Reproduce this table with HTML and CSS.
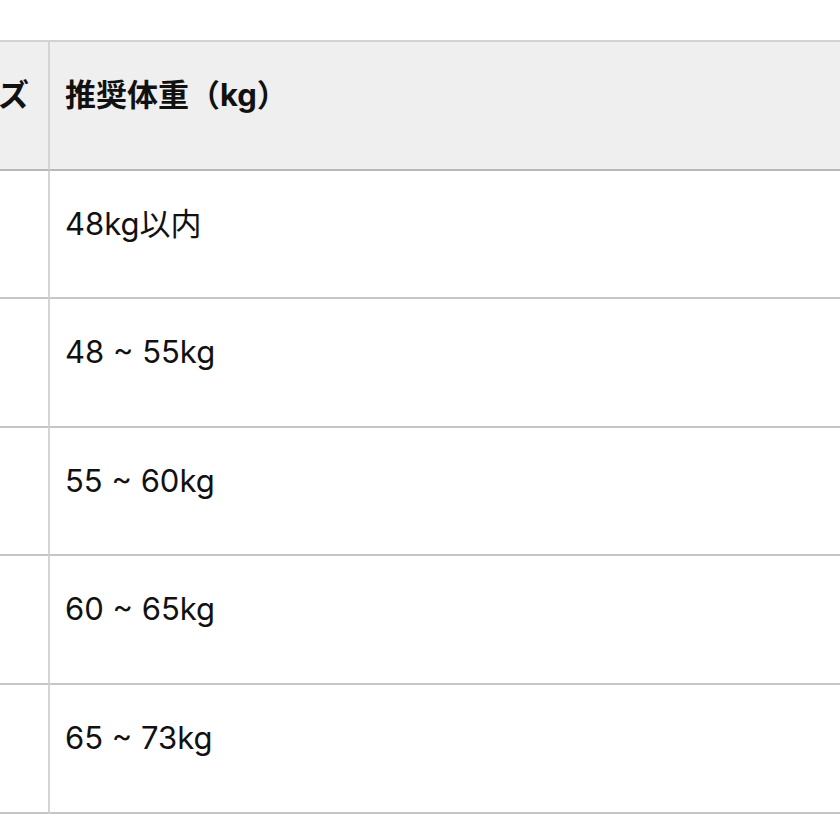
FILE: index.html
```html
<!DOCTYPE html>
<html lang="ja">
<head>
<meta charset="utf-8">
<link rel="stylesheet" href="styles.css">
</head>
<body>
<div class="wrap">
  <table class="size-table">
    <colgroup>
      <col class="col-size">
      <col class="col-weight">
    </colgroup>
    <thead>
      <tr>
        <th class="c-size"><div class="clip">サイズ</div></th>
        <th class="c-weight">推奨体重（kg）</th>
      </tr>
    </thead>
    <tbody>
      <tr><td class="c-size"></td><td class="c-weight">48kg以内</td></tr>
      <tr><td class="c-size"></td><td class="c-weight">48 ~ 55kg</td></tr>
      <tr><td class="c-size"></td><td class="c-weight">55 ~ 60kg</td></tr>
      <tr><td class="c-size"></td><td class="c-weight">60 ~ 65kg</td></tr>
      <tr><td class="c-size"></td><td class="c-weight">65 ~ 73kg</td></tr>
    </tbody>
  </table>
</div>
</body>
</html>
```
FILE: styles.css
```css
html, body {
  margin: 0;
  padding: 0;
  background: #ffffff;
}
body {
  font-family: "Inter", "Noto Sans CJK JP", sans-serif;
  color: #111111;
  overflow: hidden;
}
.wrap {
  padding-top: 40px;
}
.size-table {
  width: 100%;
  table-layout: fixed;
  border-collapse: separate;
  border-spacing: 0;
  border-top: 2px solid #d2d2d2;
}
.col-size {
  width: 50px;
}
.size-table th,
.size-table td {
  box-sizing: border-box;
  height: 128.6px;
  padding: 33px 0 0 15px;
  vertical-align: top;
  text-align: left;
  font-size: 31px;
  line-height: 40px;
  border-bottom: 2px solid #c6c6c6;
  white-space: nowrap;
}
.size-table th {
  background: #efefef;
  font-weight: 700;
  border-bottom-color: #b8b8b8;
}
.size-table td {
  font-weight: 400;
}
.size-table .c-size {
  padding: 33px 0 0 0;
  border-right: 2px solid #d4d4d4;
}
.clip {
  display: flex;
  justify-content: flex-end;
  overflow: hidden;
  padding-right: 19px;
}
```
